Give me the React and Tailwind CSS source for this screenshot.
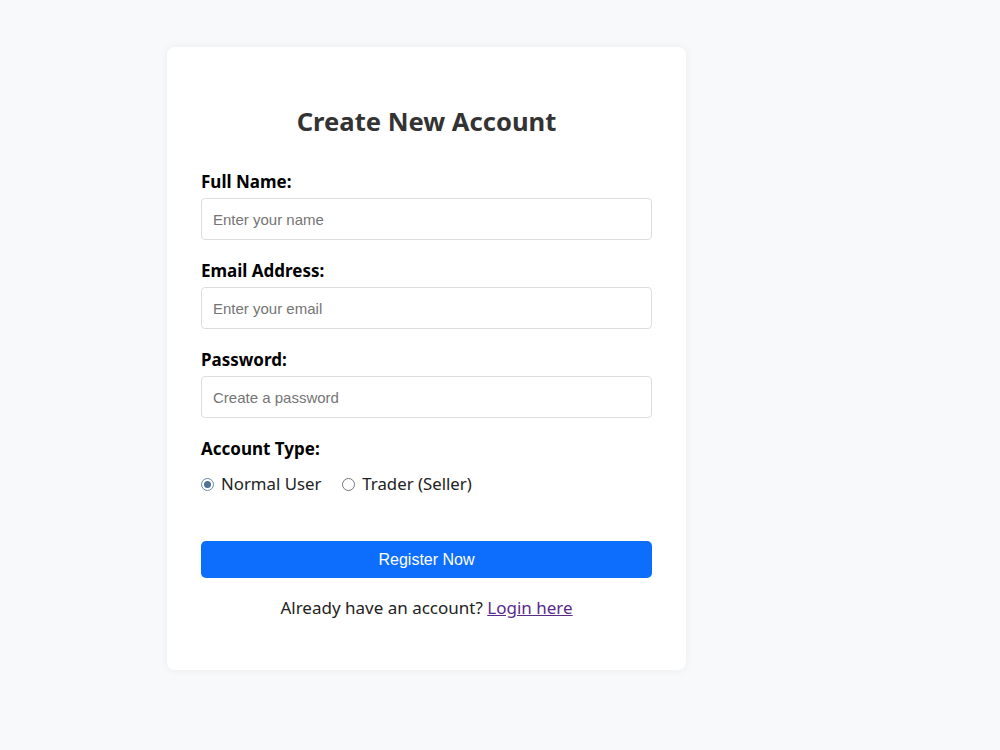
import { useState } from "react";

const FIELDS = [
  { id: "name", label: "Full Name:", type: "text", placeholder: "Enter your name" },
  { id: "email", label: "Email Address:", type: "email", placeholder: "Enter your email" },
  { id: "password", label: "Password:", type: "password", placeholder: "Create a password" },
];

function Radio({ checked, label, onClick }) {
  return (
    <label onClick={onClick} className="flex items-center gap-[7px] cursor-pointer">
      <span
        className={`w-[13px] h-[13px] rounded-full border flex items-center justify-center bg-white ${
          checked ? "border-[#6b88a6]" : "border-[#767676]"
        }`}
      >
        {checked && <span className="w-[7px] h-[7px] rounded-full bg-[#4f7396]" />}
      </span>
      <span>{label}</span>
    </label>
  );
}

export default function App() {
  const [accountType, setAccountType] = useState("user");

  return (
    <div className="min-h-screen bg-[#f8f9fa] pt-[47px] pl-[167px] font-['Noto_Sans',sans-serif]">
      <div className="w-[519px] h-[623px] bg-white rounded-[8px] shadow-[0_0_10px_rgba(0,0,0,0.06)] px-[34px] pt-[57px]">
        <h2 className="text-center text-[25.6px] leading-[36px] font-bold text-[#333] mb-[31px]">
          Create New Account
        </h2>

        {FIELDS.map((field) => (
          <div key={field.id} className="mb-[20px]">
            <label
              htmlFor={field.id}
              className="block text-[17px] leading-[22px] font-bold text-black mb-[5px]"
            >
              {field.label}
            </label>
            <input
              id={field.id}
              type={field.type}
              placeholder={field.placeholder}
              className="block w-full h-[42px] border border-[#ddd] rounded-[4px] px-[11px] text-[15px] font-['Liberation_Sans',sans-serif] placeholder:text-[#757575] outline-none"
            />
          </div>
        ))}

        <div className="mt-[1px] text-[17px] leading-[22px] font-bold text-black mb-[13px]">
          Account Type:
        </div>
        <div className="flex items-center gap-[21px] text-[16.8px] leading-[22px] text-[#222]">
          <Radio
            checked={accountType === "user"}
            label="Normal User"
            onClick={() => setAccountType("user")}
          />
          <Radio
            checked={accountType === "trader"}
            label="Trader (Seller)"
            onClick={() => setAccountType("trader")}
          />
        </div>

        <button className="mt-[46px] w-full h-[37px] bg-[#0d6efd] text-white rounded-[5px] text-[16px] font-['Liberation_Sans',sans-serif]">
          Register Now
        </button>

        <p className="mt-[19px] text-center text-[17px] leading-[22px] text-[#222]">
          Already have an account?{" "}
          <a href="#" className="text-[#5a2a8a] underline">
            Login here
          </a>
        </p>
      </div>
    </div>
  );
}
